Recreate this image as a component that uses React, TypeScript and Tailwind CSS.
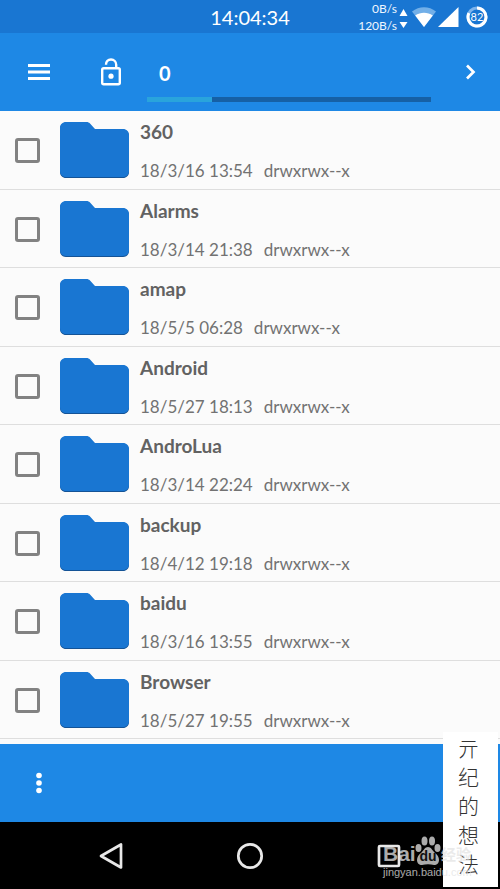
type FileEntry = {
    name: string;
    date: string;
    mode: string;
};

const files: FileEntry[] = [
    { name: "360", date: "18/3/16 13:54", mode: "drwxrwx--x" },
    { name: "Alarms", date: "18/3/14 21:38", mode: "drwxrwx--x" },
    { name: "amap", date: "18/5/5 06:28", mode: "drwxrwx--x" },
    { name: "Android", date: "18/5/27 18:13", mode: "drwxrwx--x" },
    { name: "AndroLua", date: "18/3/14 22:24", mode: "drwxrwx--x" },
    { name: "backup", date: "18/4/12 19:18", mode: "drwxrwx--x" },
    { name: "baidu", date: "18/3/16 13:55", mode: "drwxrwx--x" },
    { name: "Browser", date: "18/5/27 19:55", mode: "drwxrwx--x" },
];

const StatusBar = () => (
    <div className="relative flex h-[33px] items-center justify-center bg-[#1976d2] text-white">
        <span className="text-xl leading-6">14:04:34</span>
        <div className="absolute inset-y-0 right-3 flex items-center">
            <div className="flex flex-col items-end text-xs leading-[17px] text-blue-50">
                <span>0B/s</span>
                <span>120B/s</span>
            </div>
            <svg className="ml-[2px]" width="9" height="22" viewBox="0 0 9 22" fill="#fff">
                <path d="M4.500 3L8.500 10h-8z" />
                <path d="M4.500 22L8.500 16h-8z" />
            </svg>
            <svg className="ml-1" width="24" height="20" viewBox="0 0 24 20">
                <path d="M0 4.500C7-1.200 17-1.200 24 4.500L12 20z" fill="#72afe8" />
                <path d="M3.200 8.500C8.500 4.800 15.500 4.800 20.800 8.500L12 20z" fill="#fff" />
            </svg>
            <svg className="ml-[2px]" width="21" height="20" viewBox="0 0 21 20" fill="#fff">
                <path d="M20.500 0v20H0z" />
            </svg>
            <svg className="ml-[7px]" width="22" height="22" viewBox="0 0 22 22">
                <circle cx="11" cy="11" r="9" fill="none" stroke="#7db4ec" strokeWidth="3" />
                <path d="M11 2A9 9 0 1 1 2.900 7.100" fill="none" stroke="#fff" strokeWidth="3" />
                <text x="11" y="15" textAnchor="middle" fontSize="11" fill="#fff">82</text>
            </svg>
        </div>
    </div>
);

const Toolbar = () => (
    <header className="flex h-[78px] bg-[#1e88e5] text-white">
        <button type="button" aria-label="Menu" className="flex w-[78px] items-center justify-center">
            <svg width="22" height="16" viewBox="0 0 22 16" fill="#fff">
                <path d="M0 0h22v3H0zM0 6.500h22v3H0zM0 13h22v3H0z" />
            </svg>
        </button>
        <button type="button" aria-label="Unlock" className="flex w-[66px] items-center justify-center">
            <svg width="22" height="28" viewBox="0 0 22 28" fill="none" stroke="#fff" strokeWidth="2.400">
                <rect x="2.200" y="10.200" width="17.600" height="16" rx="1.500" />
                <path d="M6 6.700C6 3.500 8 1.500 11 1.500s5.200 2.200 5.200 5.200v3.500" />
                <circle cx="11" cy="18.200" r="2.600" fill="#fff" stroke="none" />
            </svg>
        </button>
        <div className="ml-[3px] flex flex-1 flex-col justify-end gap-3 pb-[9px]">
            <span className="pl-3 text-xl leading-6 font-bold">0</span>
            <div role="progressbar" aria-valuenow={23} aria-label="Storage used" className="h-[5px] bg-[#1660a5]">
                <div className="h-full bg-[#29a4dc]" style={{ width: "23%" }} />
            </div>
        </div>
        <button type="button" aria-label="Next" className="ml-2 flex w-[61px] items-center justify-center">
            <svg width="12" height="16" viewBox="0 0 12 16" fill="none" stroke="#fff" strokeWidth="2.700">
                <path d="M3 1.500L9.500 8L3 14.500" />
            </svg>
        </button>
    </header>
);

const FolderIcon = () => (
    <svg className="shrink-0" width="69" height="57" viewBox="0 0 69 57">
        <path d="M6 1h20.500c1.500 0 2.500.5 3.500 1.500L35 8h28c3.500 0 6 2.500 6 6v36c0 3.500-2.500 6-6 6H6c-3.500 0-6-2.500-6-6V7c0-3.500 2.500-6 6-6z" fill="#145396" />
        <path d="M6 0h20.500c1.500 0 2.500.5 3.500 1.500L35 7h28c3.500 0 6 2.500 6 6v36c0 3.500-2.500 6-6 6H6c-3.500 0-6-2.500-6-6V6c0-3.500 2.500-6 6-6z" fill="#1976d2" />
    </svg>
);

const FileRow = ({ file }: { file: FileEntry }) => (
    <li className="border-b border-[#dedede]">
        <label className="flex h-full items-center pt-[2px] pl-[15px]">
            <input
                type="checkbox"
                aria-label={file.name}
                className="size-[25px] shrink-0 appearance-none rounded-[3px] border-[3px] border-[#828282]"
            />
            <span className="ml-5">
                <FolderIcon />
            </span>
            <span className="ml-[11px] flex flex-col gap-[15px] pt-[2px]">
                <span className="text-[19px] leading-6 font-bold text-[#626262]">{file.name}</span>
                <span className="flex gap-[11px] text-[17px] leading-6 text-[#727272]">
                    <span>{file.date}</span>
                    <span>{file.mode}</span>
                </span>
            </span>
        </label>
    </li>
);

const NavigationBar = () => (
    <nav className="grid h-[67px] grid-cols-3 bg-black px-[42px]">
        <button type="button" aria-label="Back" className="flex items-center justify-center">
            <svg width="24" height="28" viewBox="0 0 24 28" fill="none" stroke="#e8e8e8" strokeWidth="2.700" strokeLinejoin="round">
                <path d="M22 2.500v23L2 14z" />
            </svg>
        </button>
        <button type="button" aria-label="Home" className="flex items-center justify-center">
            <svg width="28" height="28" viewBox="0 0 28 28" fill="none" stroke="#e8e8e8" strokeWidth="2.700">
                <circle cx="14" cy="14" r="11.700" />
            </svg>
        </button>
        <button type="button" aria-label="Recent apps" className="flex items-center justify-center">
            <svg width="24" height="24" viewBox="0 0 24 24" fill="none" stroke="#e8e8e8" strokeWidth="2.700">
                <rect x="2" y="2" width="20" height="20" rx="1" />
            </svg>
        </button>
    </nav>
);

const Watermark = () => (
    <div className="pointer-events-none absolute right-[2px] bottom-[2px]">
        <div className="flex h-[155px] w-[55px] flex-col items-center bg-white pt-px pr-1 text-[21px] leading-[29px] font-light text-[#333]">
            {["亓", "纪", "的", "想", "法"].map((glyph) => (
                <span key={glyph}>{glyph}</span>
            ))}
        </div>
        <div className="absolute right-6 bottom-[9px] flex w-[91px] flex-col text-[#e4e4e4]/75">
            <div className="flex items-end">
                <span className="w-8 font-[Liberation_Sans] text-[21px] leading-6 font-bold">Bai</span>
                <svg width="26" height="30" viewBox="0 0 26 30" fill="currentColor">
                    <ellipse cx="3.500" cy="12" rx="3" ry="4" />
                    <ellipse cx="9.500" cy="5" rx="3" ry="4.500" />
                    <ellipse cx="17" cy="5" rx="3" ry="4.500" />
                    <ellipse cx="22.500" cy="12" rx="3" ry="4" />
                    <path d="M13 11c-3 0-4 3-6.500 5.500C3.500 19 2 21 2 24c0 3 2 5 5 5 2 0 4-.7 6-.7s4 .7 6 .7c3 0 5-2 5-5 0-3-1.500-5-4.500-7.500C17 14 16 11 13 11z" />
                    <text x="13" y="25" textAnchor="middle" fontFamily="Liberation Sans" fontSize="14" fontWeight="bold" fill="#111">du</text>
                </svg>
                <span className="text-[15px] leading-6 font-bold">经验</span>
            </div>
            <span className="font-[Liberation_Sans] text-[11px] leading-3">jingyan.baidu.com</span>
        </div>
    </div>
);

export default function App() {
    return (
        <div className="relative flex min-h-screen flex-col bg-[#fbfbfb] font-[Lato,'Noto_Sans_CJK_SC',sans-serif]">
            <StatusBar />
            <Toolbar />
            <ul className="grid flex-1 auto-rows-fr">
                {files.map((file) => (
                    <FileRow key={file.name} file={file} />
                ))}
            </ul>
            <footer className="mt-[5px] flex h-[78px] bg-[#1e88e5]">
                <button type="button" aria-label="More options" className="flex w-[78px] items-center justify-center">
                    <svg width="6" height="22" viewBox="0 0 6 22" fill="#fff">
                        <circle cx="3" cy="3.500" r="2.800" />
                        <circle cx="3" cy="11" r="2.800" />
                        <circle cx="3" cy="18.500" r="2.800" />
                    </svg>
                </button>
            </footer>
            <NavigationBar />
            <Watermark />
        </div>
    );
}
